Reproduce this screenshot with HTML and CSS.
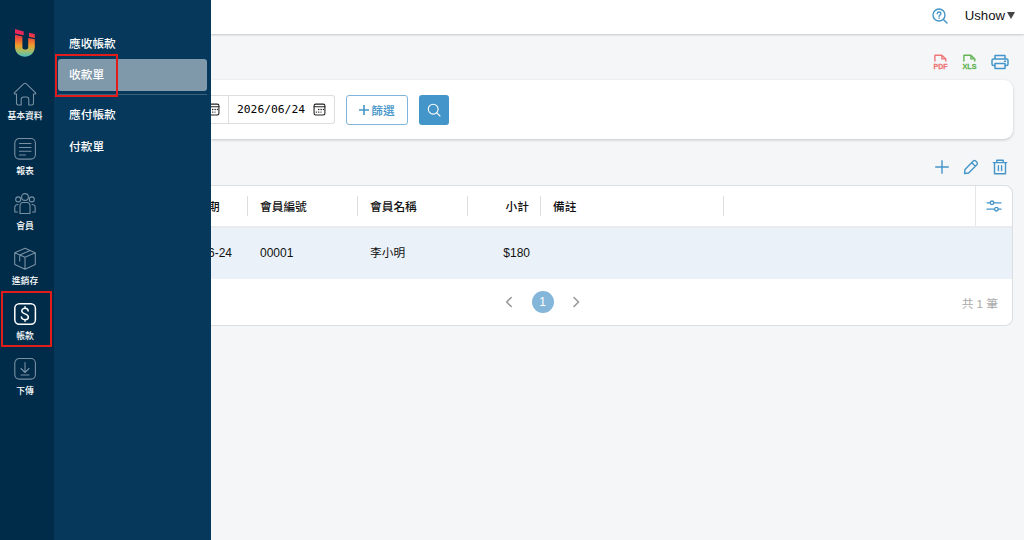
FILE: index.html
```html
<!DOCTYPE html>
<html lang="zh-Hant">
<head>
  <meta charset="UTF-8">
  <meta name="viewport" content="width=device-width, initial-scale=1.0">
  <title>收款單</title>
  <link rel="stylesheet" href="styles.css">
</head>
<body>
  <nav class="sidebar">
    <svg class="logo" viewBox="0 0 20 28">
      <defs>
        <linearGradient id="logoGradient" x1="0" y1="0" x2="0" y2="28" gradientUnits="userSpaceOnUse">
          <stop offset="0.15" stop-color="#e8265c"></stop>
          <stop offset="0.32" stop-color="#ee4b3a"></stop>
          <stop offset="0.6" stop-color="#efa02c"></stop>
          <stop offset="0.78" stop-color="#a5bd65"></stop>
          <stop offset="1" stop-color="#45bdc4"></stop>
        </linearGradient>
      </defs>
      <path fill="url(#logoGradient)" d="M0 0 8.7 2.5V6.2L0 4.5ZM14 3.8 19.8 5.1V9L14 7.7ZM0 5.7 7.4 7.5V18.5C7.4 21.3 13.2 21.3 13.2 18.5V9L19.8 10.3V17.8C19.8 31 0 31 0 17.8Z"></path>
    </svg>
    <a class="nav-item">
      <svg class="nav-icon" viewBox="0 0 24 24"><path d="M3.5 12H2.2C1.2 12 1 11.2 1.6 10.6L10.6 1.9Q12 .6 13.4 1.9L22.4 10.6C23 11.2 22.8 12 21.8 12H20.5V21Q20.5 23 18.8 23H15.8V17.5Q15.8 15 13.5 15H10.5Q8.2 15 8.2 17.5V23H5.2Q3.5 23 3.5 21Z"></path></svg>
      <span>基本資料</span>
    </a>
    <a class="nav-item">
      <svg class="nav-icon" viewBox="0 0 24 24"><rect x="1.8" y="1.5" width="20.6" height="20.6" rx="4.5"></rect><path d="M6.5 6.5H18M6.5 10.5H18M6.5 14.3H18M6.5 18H12.5"></path></svg>
      <span>報表</span>
    </a>
    <a class="nav-item">
      <svg class="nav-icon" viewBox="0 0 24 24"><circle cx="12" cy="5" r="3.4"></circle><circle cx="5.2" cy="7.4" r="2.5"></circle><circle cx="18.8" cy="7.4" r="2.5"></circle><path d="M7 21.5V14.5Q7 10.5 10 10.5H14Q17 10.5 17 14.5V21.5ZM5 12.5Q1.8 12.5 1.8 15.5V20H4.5M19 12.5Q22.2 12.5 22.2 15.5V20H19.5"></path></svg>
      <span>會員</span>
    </a>
    <a class="nav-item">
      <svg class="nav-icon" viewBox="0 0 24 24"><path d="M12 1.3 22.3 5.7V17.5L12 22.3 1.7 17.5V5.7ZM1.7 5.7 12 10.3 22.3 5.7M12 10.3V22.3M6.7 14V8L17.2 3.5"></path></svg>
      <span>進銷存</span>
    </a>
    <a class="nav-item active">
      <svg class="nav-icon" viewBox="0 0 24 24"><rect x="1.8" y="1.7" width="20.6" height="20.6" rx="4.5"></rect><path d="M15.2 8.9C14.8 5.5 8.8 5.5 8.8 8.9 8.8 12.3 15.4 11.4 15.4 15 15.4 18.5 8.8 18.5 8.4 15M12 4.8V6.2M12 17.8V19.2"></path></svg>
      <span>帳款</span>
    </a>
    <a class="nav-item">
      <svg class="nav-icon" viewBox="0 0 24 24"><rect x="1.8" y="1.5" width="20.6" height="20.6" rx="4.5"></rect><path d="M12 5.5V15.3M8 11.5 12 15.5 16 11.5M8 18H16"></path></svg>
      <span>下傳</span>
    </a>
    <div class="mark mark-nav"></div>
  </nav>

  <aside class="submenu">
    <a class="submenu-item">應收帳款</a>
    <a class="submenu-item selected">收款單</a>
    <div class="submenu-divider"></div>
    <a class="submenu-item">應付帳款</a>
    <a class="submenu-item">付款單</a>
    <div class="mark mark-menu"></div>
  </aside>

  <div class="page">
    <header class="topbar">
      <svg class="help-icon" viewBox="0 0 16 16"><circle cx="7" cy="7" r="6"></circle><path d="M11.4 11.4 15 15M5.2 5.8C5.3 3.4 8.9 3.5 8.9 5.7 8.9 7 7.1 7 7.1 8.4M7.1 9.9V10.3"></path></svg>
      <span class="user">Ushow</span>
      <span class="caret"></span>
    </header>

    <main class="content">
      <div class="exports">
        <svg class="file-icon pdf" viewBox="0 0 14 16"><path d="M1.4 7V1.2H8.4L12.3 4.9V7M8.4 1.2V4.9H12.3"></path><text x="0" y="14.8" textLength="14" lengthAdjust="spacingAndGlyphs">PDF</text></svg>
        <svg class="file-icon xls" viewBox="0 0 14 16"><path d="M1.4 7V1.2H8.4L12.3 4.9V7M8.4 1.2V4.9H12.3"></path><text x="0" y="14.8" textLength="14" lengthAdjust="spacingAndGlyphs">XLS</text></svg>
        <svg class="print-icon" viewBox="0 0 18 16"><path d="M4 5V1.5H14V5M4 11.5H2.5Q1 11.5 1 10V6.5Q1 5 2.5 5H15.5Q17 5 17 6.5V10Q17 11.5 15.5 11.5H14M4 9.5H14V14.5H4ZM13.5 7.2H14.6"></path></svg>
      </div>

      <section class="filters">
        <div class="date-range">
          <div class="date-start">
            <svg class="calendar" viewBox="0 0 12 12"><rect x="1" y="1" width="10" height="10" rx="1.5"></rect><path d="M1 3.4H11"></path><path class="dots" d="M5.2 6H9.6M3 8.4H7.4"></path></svg>
          </div>
          <div class="date-end">
            <span>2026/06/24</span>
            <svg class="calendar" viewBox="0 0 12 12"><rect x="1" y="1" width="10" height="10" rx="1.5"></rect><path d="M1 3.4H11"></path><path class="dots" d="M5.2 6H9.6M3 8.4H7.4"></path></svg>
          </div>
        </div>
        <button class="filter-btn">
          <svg class="filter-plus" viewBox="0 0 10 10"><path d="M5 0V10M0 5H10"></path></svg>
          <span>篩選</span>
        </button>
        <button class="search-btn">
          <svg class="search-icon" viewBox="0 0 14 14"><circle cx="6.2" cy="6.2" r="4.9"></circle><path d="M9.8 9.8 13 13"></path></svg>
        </button>
      </section>

      <div class="tools">
        <svg class="tool-icon" viewBox="0 0 16 16"><path d="M8 1.7V14.3M1.7 8H14.3"></path></svg>
        <svg class="tool-icon" viewBox="0 0 16 16"><path d="M1.5 14.5 2 10.4 10.3 2.1Q11.5 1 12.7 2.1L13.9 3.3Q15 4.5 13.9 5.7L5.6 14ZM8.8 3.7 12.3 7.2"></path></svg>
        <svg class="tool-icon" viewBox="0 0 16 16"><path d="M1.3 3.6H14.7M4.8 3.4V1.2H11.2V3.4M2.5 3.8V14.8H13.5V3.8M6.4 6.8V11.6M9.6 6.8V11.6"></path></svg>
      </div>

      <section class="grid">
        <div class="grid-head">
          <div class="cell col-date">期</div>
          <div class="cell col-code">會員編號</div>
          <div class="cell col-name">會員名稱</div>
          <div class="cell col-sum">小計</div>
          <div class="cell col-note">備註</div>
          <div class="col-settings">
            <svg class="slider-icon" viewBox="0 0 16 14"><path d="M1 3.8H4.2M7.8 3.8H15M1 10.2H8.6M12.2 10.2H15"></path><circle cx="6" cy="3.8" r="1.8"></circle><circle cx="10.4" cy="10.2" r="1.8"></circle></svg>
          </div>
        </div>
        <div class="grid-row">
          <div class="cell col-date">6-24</div>
          <div class="cell col-code">00001</div>
          <div class="cell col-name">李小明</div>
          <div class="cell col-sum">$180</div>
          <div class="cell col-note"></div>
        </div>
        <div class="grid-foot">
          <div class="pager">
            <svg class="arrow" viewBox="0 0 8 12"><path d="M6.2 1.5 1.7 6 6.2 10.5"></path></svg>
            <span class="page-number">1</span>
            <svg class="arrow" viewBox="0 0 8 12"><path d="M1 1.5 5.5 6 1 10.5"></path></svg>
          </div>
          <span class="total">共 1 筆</span>
        </div>
      </section>
    </main>
  </div>
</body>
</html>
```
FILE: styles.css
```css
* {
  box-sizing: border-box;
}

body {
  margin: 0;
  height: 100vh;
  display: flex;
  overflow: hidden;
  background: #f4f6f8;
  color: #111;
  font-family: "Liberation Sans", "Noto Sans CJK TC", sans-serif;
  font-size: 11.7px;
}

svg {
  display: block;
  flex: none;
  fill: none;
  stroke: currentColor;
  stroke-linecap: round;
  stroke-linejoin: round;
}

button {
  padding: 0;
  font: inherit;
}

/* Sidebar */
.sidebar {
  position: relative;
  width: 54px;
  flex: none;
  padding: 29px 4px 0 0;
  display: flex;
  flex-direction: column;
  align-items: center;
  background: #002b49;
}

.logo {
  width: 20px;
  height: 28px;
  margin-bottom: 25px;
  stroke: none;
}

.nav-item {
  height: 55px;
  display: flex;
  flex-direction: column;
  align-items: center;
  gap: 4px;
  color: #7890a2;
}

.nav-icon {
  width: 24px;
  height: 24px;
  stroke-width: 1.1;
}

.nav-item span {
  color: #fff;
  font-size: 8.8px;
  font-weight: 500;
  line-height: 13px;
  white-space: nowrap;
}

.nav-item.active {
  color: #fff;
}

.nav-item.active .nav-icon {
  stroke-width: 1.5;
}

/* Submenu */
.submenu {
  position: relative;
  width: 157px;
  flex: none;
  padding: 27.5px 4px 0;
  background: #06385b;
  color: #fff;
  font-weight: 500;
}

.submenu-item {
  display: block;
  height: 31.5px;
  padding-left: 11px;
  line-height: 32px;
  border-radius: 3px;
}

.submenu-item.selected {
  background: #7f98aa;
}

.submenu-divider {
  height: 1px;
  margin: 3.5px 0 4px;
  background: #3c617c;
}

.mark {
  position: absolute;
  border: 2px solid #e21b1b;
}

.mark-nav {
  left: 1px;
  top: 291px;
  width: 51px;
  height: 56px;
}

.mark-menu {
  left: 1px;
  top: 54px;
  width: 63px;
  height: 43px;
}

/* Page */
.page {
  flex: 1;
  min-width: 0;
  overflow: hidden;
}

.topbar {
  height: 34px;
  padding: 0 9px 3px 0;
  display: flex;
  align-items: center;
  justify-content: flex-end;
  background: #fff;
  box-shadow: 0 1px 2px rgba(0, 0, 0, 0.2);
}

.help-icon {
  width: 16px;
  height: 16px;
  margin-right: 17px;
  color: #4495c9;
  stroke-width: 1.4;
}

.user {
  font-size: 13.2px;
  color: #111;
}

.caret {
  margin-left: 2px;
  border: 4px solid transparent;
  border-top: 7px solid #444;
  border-bottom: 0;
}

.content {
  padding: 20px 11px 0 0;
}

.exports {
  height: 16px;
  padding-right: 4px;
  display: flex;
  justify-content: flex-end;
  align-items: center;
  gap: 14px;
}

.file-icon {
  width: 15px;
  height: 16px;
  stroke-width: 1.4;
}

.file-icon text {
  fill: currentColor;
  stroke-width: 0.3;
  font-family: "Liberation Sans", sans-serif;
  font-size: 7.6px;
  font-weight: bold;
}

.pdf {
  color: #ef7676;
}

.xls {
  color: #64b557;
}

.print-icon {
  width: 18px;
  height: 16px;
  color: #4495c9;
  stroke-width: 1.5;
}

.filters {
  height: 59px;
  margin-top: 10px;
  display: flex;
  align-items: center;
  background: #fff;
  border-radius: 0 9px 9px 0;
  box-shadow: 0 1px 3px rgba(0, 0, 0, 0.2);
}

.date-range {
  height: 29px;
  display: flex;
  border: 1px solid #ddd;
  border-left: 0;
  border-radius: 0 3px 3px 0;
}

.date-start {
  width: 18px;
  display: flex;
  align-items: center;
  justify-content: flex-end;
  padding-right: 8px;
  border-right: 1px solid #ddd;
}

.date-end {
  width: 105px;
  padding: 0 8px;
  display: flex;
  align-items: center;
  justify-content: space-between;
  font-family: "DejaVu Sans Mono", monospace;
  font-size: 11.3px;
  color: #000;
}

.calendar {
  width: 13px;
  height: 13px;
  color: #222;
  stroke-width: 1;
}

.dots {
  stroke-width: 1.2;
  stroke-dasharray: 0.2 2;
}

.filter-btn {
  width: 62px;
  height: 30px;
  margin-left: 11px;
  display: flex;
  align-items: center;
  justify-content: center;
  gap: 2px;
  background: #fff;
  border: 1px solid #7fb5da;
  border-radius: 3px;
  color: #4495c9;
  font-weight: 500;
}

.filter-plus {
  width: 10px;
  height: 10px;
  stroke-width: 1.6;
}

.search-btn {
  width: 30px;
  height: 30px;
  margin-left: 11px;
  display: flex;
  align-items: center;
  justify-content: center;
  background: #4495c9;
  border: 0;
  border-radius: 3px;
  color: #fff;
}

.search-icon {
  width: 14px;
  height: 14px;
  stroke-width: 1.1;
}

.tools {
  height: 46px;
  padding: 10px 5px 0 0;
  display: flex;
  align-items: center;
  justify-content: flex-end;
  gap: 13px;
  color: #4495c9;
}

.tool-icon {
  width: 16px;
  height: 16px;
  stroke-width: 1.4;
}

/* Grid */
.grid {
  height: 141px;
  overflow: hidden;
  background: #fff;
  border: 1px solid #dcdfe2;
  border-left: 0;
  border-radius: 0 8px 8px 0;
}

.grid-head {
  height: 42px;
  display: flex;
  align-items: center;
  border-bottom: 2px solid #e9ebed;
  font-weight: 500;
}

.cell {
  flex: none;
  height: 20px;
  padding: 0 12px;
  line-height: 20px;
  white-space: nowrap;
}

.grid-head .cell {
  line-height: 22px;
  border-right: 1px solid #ddd;
}

.col-date {
  width: 37px;
  padding: 0;
  text-indent: -3px;
}

.col-code,
.col-name {
  width: 110px;
}

.grid .col-sum {
  width: 73px;
  padding-right: 11px;
  text-align: right;
}

.col-note {
  width: 183px;
}

.col-settings {
  width: 37px;
  height: 40px;
  margin-left: auto;
  display: flex;
  align-items: center;
  justify-content: center;
  border-left: 1px solid #e4e6e8;
  color: #4495c9;
}

.slider-icon {
  width: 16px;
  height: 14px;
  stroke-width: 1.3;
}

.grid-row {
  height: 51px;
  padding-bottom: 2px;
  display: flex;
  align-items: center;
  background: #eaf1f8;
  font-size: 12px;
}

.grid-row .col-name {
  font-size: 11.7px;
}

.grid-foot {
  height: 46px;
  display: flex;
  align-items: center;
  color: #aaa;
}

.pager {
  display: flex;
  align-items: center;
  gap: 19px;
  margin-left: 293.5px;
}

.arrow {
  width: 8px;
  height: 12px;
  stroke-width: 1.6;
  color: #999;
}

.page-number {
  width: 22px;
  height: 22px;
  border-radius: 50%;
  background: #84b6da;
  color: #fff;
  font-size: 12px;
  line-height: 22px;
  text-align: center;
}

.total {
  margin-left: auto;
  padding-right: 14px;
}
```
